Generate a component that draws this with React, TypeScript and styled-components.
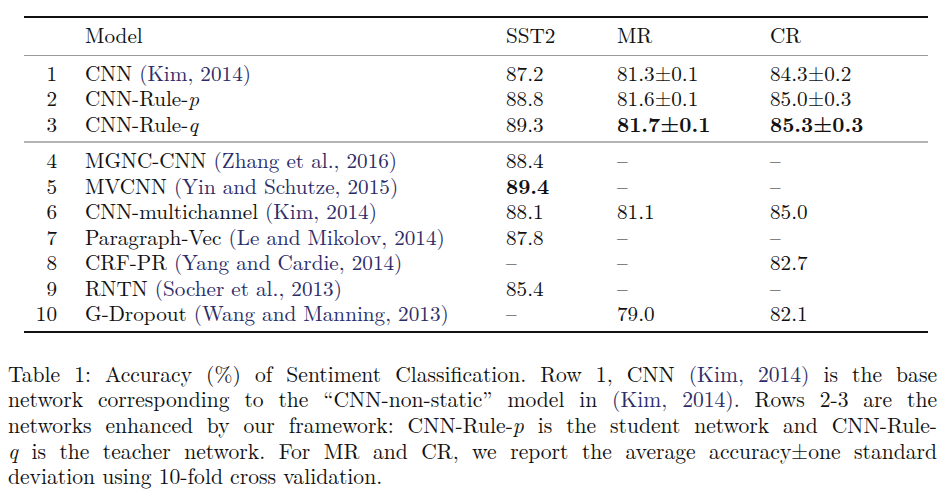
import React from 'react';
import styled, { createGlobalStyle } from 'styled-components';

const GlobalStyle = createGlobalStyle`
  html, body {
    margin: 0;
    padding: 0;
    background: #ffffff;
  }
`;

const Page = styled.div`
  width: 951px;
  height: 503px;
  padding-top: 16px;
  box-sizing: border-box;
  overflow: hidden;
  font-family: "Latin Modern Roman", "Liberation Serif", serif;
  color: #111111;
`;

const Table = styled.div`
  margin-left: 24px;
  width: 904px;
  border-top: 2px solid #111;
  border-bottom: 2px solid #111;
  font-size: 21.2px;
`;

const Group = styled.div<{ $head?: boolean; $divider?: 'thin' | 'thick' }>`
  padding: ${p => (p.$head ? '4px 0 7px' : '4px 0 5px')};
  border-top: ${p =>
    p.$divider === 'thin' ? '1px solid #9a9a9a' : p.$divider === 'thick' ? '2px solid #b4b4b4' : 'none'};
`;

const Row = styled.div`
  display: grid;
  grid-template-columns: 33px 449px 111px 153px 130px;
  height: 25.5px;
  line-height: 25.5px;
  white-space: nowrap;
`;

const Num = styled.span`
  text-align: right;
`;

const ModelCell = styled.span`
  padding-left: 28px;
`;

const Cell = styled.span<{ $bold?: boolean }>`
  font-weight: ${p => (p.$bold ? 700 : 400)};
`;

const Cite = styled.span`
  color: #2c2c68;
`;

const Ital = styled.i`
  font-style: italic;
`;

const Caption = styled.div`
  margin: 28px 14px 0 8px;
  font-size: 21.6px;
  line-height: 25.7px;
`;

const Line = styled.span<{ $last?: boolean }>`
  display: block;
  text-align: ${p => (p.$last ? 'left' : 'justify')};
  text-align-last: ${p => (p.$last ? 'left' : 'justify')};
  white-space: nowrap;
`;

type Entry = {
  n: string;
  name: React.ReactNode;
  sst: string;
  mr: string;
  cr: string;
  bold?: ('sst' | 'mr' | 'cr')[];
};

const ours: Entry[] = [
  { n: '1', name: <>CNN <Cite>(Kim, 2014)</Cite></>, sst: '87.2', mr: '81.3±0.1', cr: '84.3±0.2' },
  { n: '2', name: <>CNN-Rule-<Ital>p</Ital></>, sst: '88.8', mr: '81.6±0.1', cr: '85.0±0.3' },
  { n: '3', name: <>CNN-Rule-<Ital>q</Ital></>, sst: '89.3', mr: '81.7±0.1', cr: '85.3±0.3', bold: ['mr', 'cr'] },
];

const others: Entry[] = [
  { n: '4', name: <>MGNC-CNN <Cite>(Zhang et al., 2016)</Cite></>, sst: '88.4', mr: '–', cr: '–' },
  { n: '5', name: <>MVCNN <Cite>(Yin and Schutze, 2015)</Cite></>, sst: '89.4', mr: '–', cr: '–', bold: ['sst'] },
  { n: '6', name: <>CNN-multichannel <Cite>(Kim, 2014)</Cite></>, sst: '88.1', mr: '81.1', cr: '85.0' },
  { n: '7', name: <>Paragraph-Vec <Cite>(Le and Mikolov, 2014)</Cite></>, sst: '87.8', mr: '–', cr: '–' },
  { n: '8', name: <>CRF-PR <Cite>(Yang and Cardie, 2014)</Cite></>, sst: '–', mr: '–', cr: '82.7' },
  { n: '9', name: <>RNTN <Cite>(Socher et al., 2013)</Cite></>, sst: '85.4', mr: '–', cr: '–' },
  { n: '10', name: <>G-Dropout <Cite>(Wang and Manning, 2013)</Cite></>, sst: '–', mr: '79.0', cr: '82.1' },
];

const ResultRow: React.FC<{ e: Entry }> = ({ e }) => {
  const b = e.bold || [];
  return (
    <Row>
      <Num>{e.n}</Num>
      <ModelCell>{e.name}</ModelCell>
      <Cell $bold={b.includes('sst')}>{e.sst}</Cell>
      <Cell $bold={b.includes('mr')}>{e.mr}</Cell>
      <Cell $bold={b.includes('cr')}>{e.cr}</Cell>
    </Row>
  );
};

export default function App() {
  return (
    <Page>
      <GlobalStyle />
      <Table>
        <Group $head>
          <Row>
            <Num />
            <ModelCell>Model</ModelCell>
            <Cell>SST2</Cell>
            <Cell>MR</Cell>
            <Cell>CR</Cell>
          </Row>
        </Group>
        <Group $divider="thin">
          {ours.map(e => (
            <ResultRow key={e.n} e={e} />
          ))}
        </Group>
        <Group $divider="thick">
          {others.map(e => (
            <ResultRow key={e.n} e={e} />
          ))}
        </Group>
      </Table>
      <Caption>
        <Line>
          Table 1: Accuracy (%) of Sentiment Classification. Row 1, CNN <Cite>(Kim, 2014)</Cite> is the base
        </Line>
        <Line>
          network corresponding to the “CNN-non-static” model in <Cite>(Kim, 2014)</Cite>. Rows 2-3 are the
        </Line>
        <Line>
          networks enhanced by our framework: CNN-Rule-<Ital>p</Ital> is the student network and CNN-Rule-
        </Line>
        <Line>
          <Ital>q</Ital> is the teacher network. For MR and CR, we report the average accuracy±one standard
        </Line>
        <Line $last>deviation using 10-fold cross validation.</Line>
      </Caption>
    </Page>
  );
}
